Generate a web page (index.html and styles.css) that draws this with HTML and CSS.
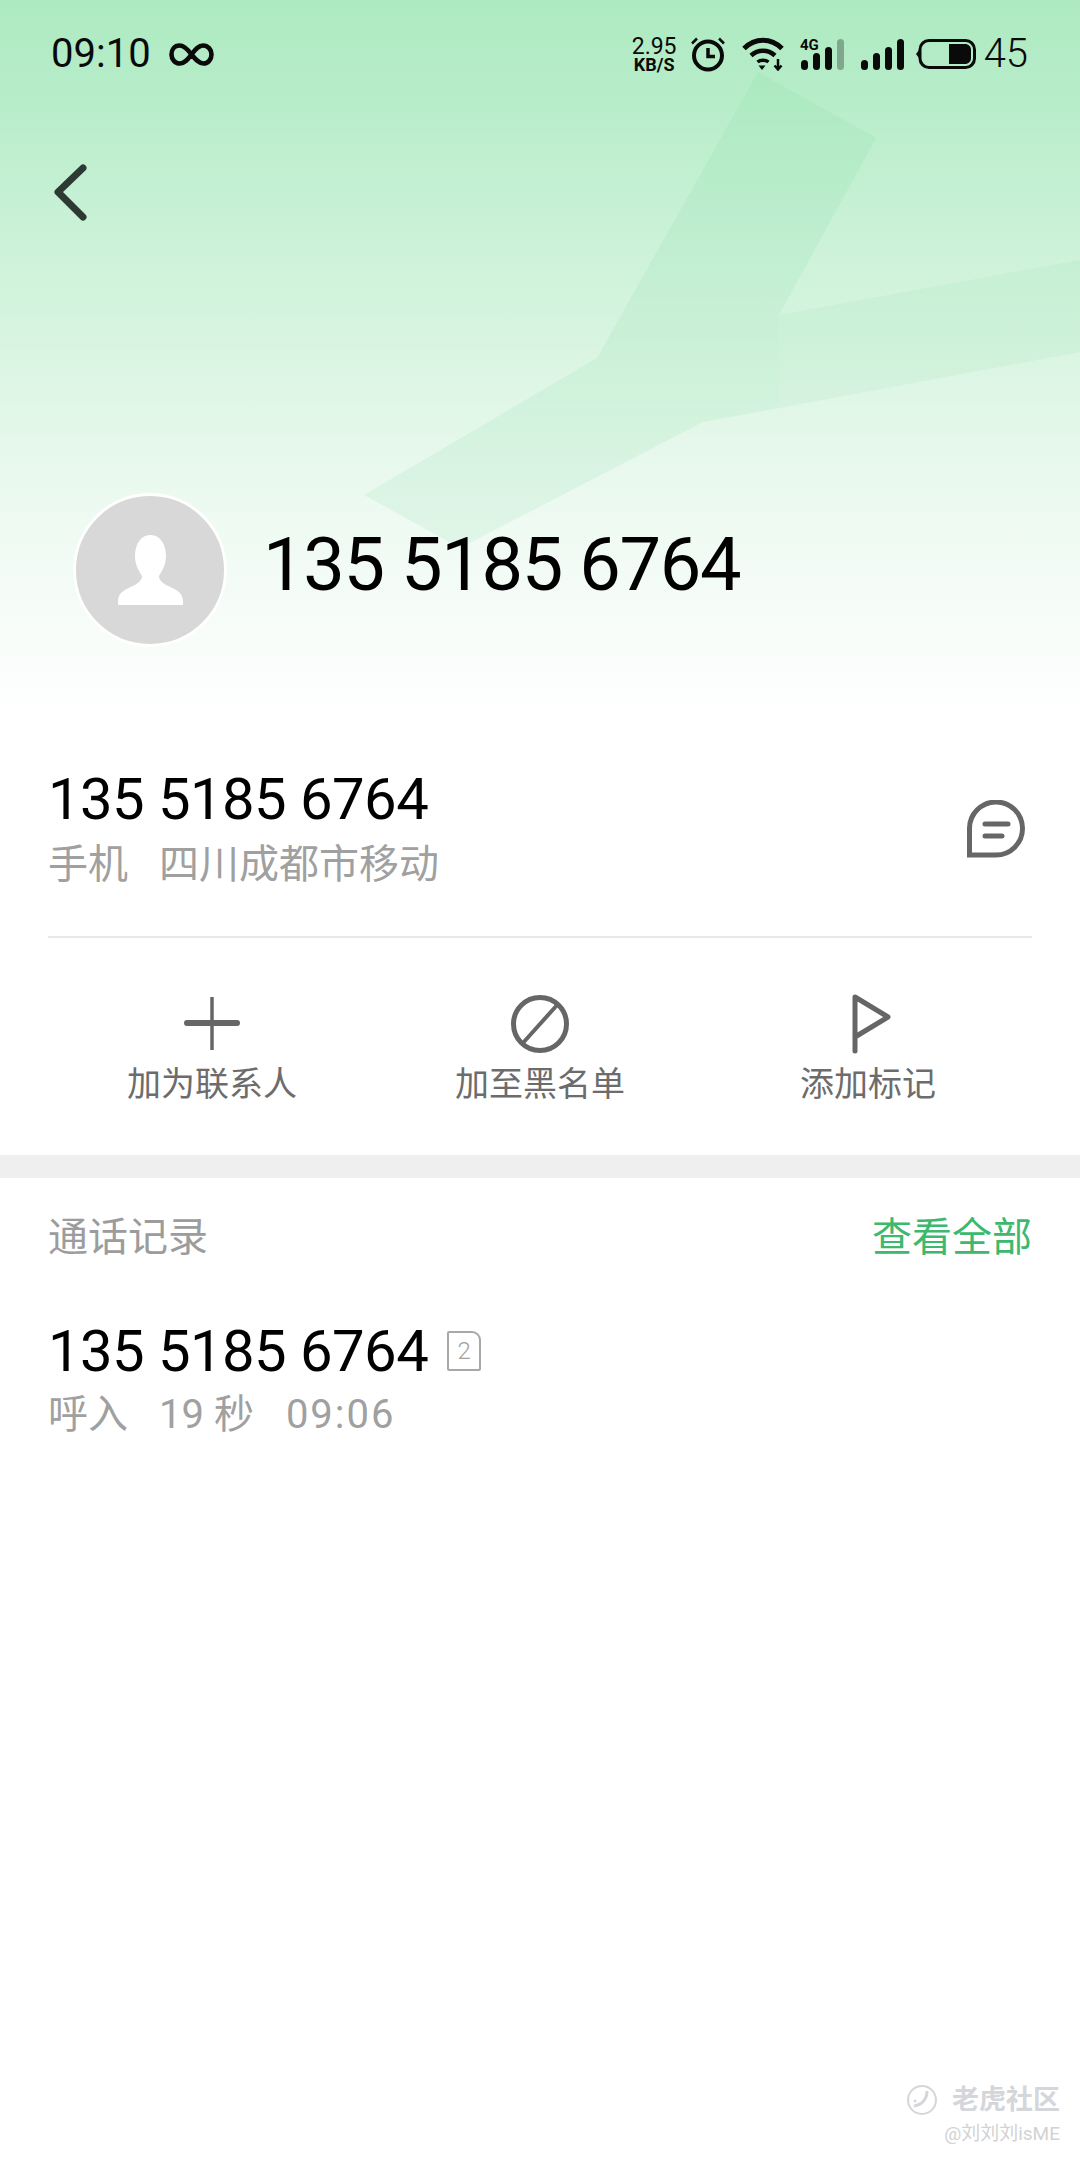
FILE: index.html
```html
<!DOCTYPE html>
<html lang="zh-CN">
<head>
  <meta charset="UTF-8">
  <meta name="viewport" content="width=device-width, initial-scale=1.0">
  <title>135 5185 6764</title>
  <link rel="stylesheet" href="styles.css">
</head>
<body>
  <header class="hero">
    <!-- background ribbon -->
    <svg class="hero-ribbon" width="1080" height="720" viewBox="0 0 1080 720">
      <polygon class="ribbon-main" points="758,72 876,138 779,315 779,408 703,422 460,548 364,495 597,358"/>
      <polygon class="ribbon-wing" points="779,315 1080,260 1080,352 779,408"/>
    </svg>

    <div class="status-bar">
      <div class="status-left">
        <span class="status-time">09:10</span>
        <svg class="icon-infinity" width="45" height="23" viewBox="0 0 45 23">
          <path d="M22.500 11.500C17 4 14 2.500 10.500 2.500C5.500 2.500 2.500 6.500 2.500 11.500C2.500 16.500 6 20.500 11 20.500C16 20.500 19 16 22.500 11.500C26 7 29 2.500 34 2.500C39 2.500 42.500 6.500 42.500 11.500C42.500 16.500 39 20.500 34.500 20.500C30 20.500 27 17 22.500 11.500Z" fill="none" stroke="#0a0a0a" stroke-width="4.600"/>
        </svg>
      </div>
      <div class="status-right">
        <div class="net-speed">
          <span class="net-value">2.95</span>
          <span class="net-unit">KB/S</span>
        </div>
        <svg width="36" height="36" viewBox="0 0 36 36" fill="none" stroke="#0a0a0a">
          <circle cx="18" cy="19.500" r="14" stroke-width="4"/>
          <path d="M18 12V20.500H25" stroke-width="3.500"/>
          <path d="M2 7.500L7 2.500M34 7.500L29 2.500" stroke-width="2.500"/>
        </svg>
        <svg width="42" height="34" viewBox="0 0 42 34" fill="none" stroke="#0a0a0a">
          <path d="M2 11.500C13 0.500 29 0.500 40 11.500" stroke-width="5"/>
          <path d="M9 18.500C16 12 26 12 33 18.500" stroke-width="4.500"/>
          <path d="M15.500 25C18.500 22.500 23.500 22.500 26.500 25" stroke-width="3.500"/>
          <path d="M16.500 28.500H23.500L20 33Z" fill="#0a0a0a" stroke="none"/>
          <path d="M36 22V32M32.500 28.500L36 32.500L39.500 28.500" stroke-width="2.500"/>
        </svg>
        <svg class="icon-sig4g" width="44" height="36" viewBox="0 -3 44 36">
          <text class="sig-label" x="0" y="12">4G</text>
          <rect x="1" y="22" width="7" height="10" rx="3.500" fill="#0a0a0a"/>
          <rect x="13" y="15" width="7" height="17" rx="3.500" fill="#0a0a0a"/>
          <rect x="25" y="9" width="7" height="23" rx="3.500" fill="#0a0a0a"/>
          <rect x="37" y="1" width="7" height="31" rx="3.500" fill="#0a0a0a" opacity="0.3"/>
        </svg>
        <svg width="44" height="33" viewBox="0 0 44 33" fill="#0a0a0a">
          <rect x="1" y="22" width="7" height="10" rx="3.500"/>
          <rect x="13" y="15" width="7" height="17" rx="3.500"/>
          <rect x="25" y="9" width="7" height="23" rx="3.500"/>
          <rect x="37" y="1" width="7" height="31" rx="3.500"/>
        </svg>
        <svg class="icon-battery" width="60" height="30" viewBox="0 0 60 30">
          <path d="M3 11L0 15L3 19Z" fill="#0a0a0a"/>
          <rect x="4" y="1.500" width="54.500" height="27" rx="9" fill="none" stroke="#0a0a0a" stroke-width="3"/>
          <path d="M33 5H49C52.500 5 55 7.500 55 11V19C55 22.500 52.500 25 49 25H33Z" fill="#0a0a0a"/>
        </svg>
        <span class="status-battery">45</span>
      </div>
    </div>

    <div class="nav">
      <svg width="40" height="60" viewBox="0 0 40 60" fill="none" stroke="#2c3a33" stroke-width="7" stroke-linecap="round" stroke-linejoin="round">
        <path d="M30 5L5 29L30 54"/>
      </svg>
    </div>

    <div class="profile">
      <div class="avatar">
        <svg width="65" height="70" viewBox="0 0 65 70">
          <path d="M32.500 0C42 0 48 9 48 21C48 30 44 36 41 41C41 45 44 47 48 50C57 54 65 57 65 66V70H0V66C0 57 8 54 17 50C21 47 24 45 24 41C21 36 17 30 17 21C17 9 23 0 32.500 0Z" fill="#fff"/>
        </svg>
      </div>
      <div class="profile-number">135 5185 6764</div>
    </div>
  </header>

  <section class="contact">
    <div class="contact-row">
      <div>
        <div class="number">135 5185 6764</div>
        <div class="sub"><span>手机</span><span>四川成都市移动</span></div>
      </div>
      <svg class="icon-message" width="58" height="58" viewBox="0 0 58 58" fill="none" stroke="#666" stroke-width="5">
        <path d="M2.500 55V29A26.500 26.500 0 1 1 29 55Z"/>
        <path d="M18 24H41M18 36H35" stroke-linecap="round"/>
      </svg>
    </div>

    <div class="actions">
      <div class="action">
        <svg width="60" height="60" viewBox="0 0 60 60" fill="none" stroke="#666">
          <path d="M30 3V56" stroke-width="3.500"/>
          <path d="M5 29H55" stroke-width="6" stroke-linecap="round"/>
        </svg>
        <span>加为联系人</span>
      </div>
      <div class="action">
        <svg width="60" height="60" viewBox="0 0 60 60" fill="none" stroke="#666" stroke-width="5">
          <circle cx="30" cy="30" r="26.500"/>
          <path d="M12 50L48 10" stroke-width="4"/>
        </svg>
        <span>加至黑名单</span>
      </div>
      <div class="action">
        <svg width="60" height="60" viewBox="0 0 60 60" fill="none" stroke="#666" stroke-width="5" stroke-linejoin="round" stroke-linecap="round">
          <path d="M17 57V3L50 23L17 43"/>
        </svg>
        <span>添加标记</span>
      </div>
    </div>
  </section>

  <div class="band"></div>

  <section class="calls">
    <div class="calls-head">
      <span class="calls-title">通话记录</span>
      <span class="calls-all">查看全部</span>
    </div>
    <div class="call">
      <div class="call-top">
        <span class="number">135 5185 6764</span>
        <span class="sim">2</span>
      </div>
      <div class="sub call-sub"><span>呼入</span><span>19 秒</span><span class="sub-time">09:06</span></div>
    </div>
  </section>

  <div class="watermark">
    <div class="wm-brand">
      <svg width="32" height="32" viewBox="0 0 32 32" fill="none" stroke="#d4d6da" stroke-width="2">
        <circle cx="16" cy="16" r="14"/>
        <path d="M21 7C21 15 16 21 8 22" stroke-width="3"/>
        <path d="M9 17h.1M13 20h.1" stroke-width="3" stroke-linecap="round"/>
      </svg>
      <span>老虎社区</span>
    </div>
    <div class="wm-user">@刘刘刘isME</div>
  </div>
</body>
</html>
```

FILE: styles.css
```css
* {
  box-sizing: border-box;
}
html, body {
  margin: 0;
  padding: 0;
}
body {
  position: relative;
  width: 1080px;
  height: 2160px;
  overflow: hidden;
  background-color: #fff;
  color: #000;
  font-family: Roboto, "Noto Sans CJK SC", sans-serif;
}

.hero {
  position: relative;
  height: 720px;
  background: linear-gradient(180deg, #aeeac1 0%, #b4ecc7 10%, #cdf2d9 35%, #e2f7e8 58%, #eefaf2 72%, #f6fcf8 85%, #fff 100%);
}
.hero-ribbon {
  position: absolute;
  top: 0;
  left: 0;
}
.ribbon-main {
  fill: #6fd692;
  opacity: 0.12;
}
.ribbon-wing {
  fill: #6fd692;
  opacity: 0.09;
}

.status-bar {
  position: relative;
  display: flex;
  justify-content: space-between;
  align-items: center;
  height: 106px;
  padding: 2px 52px 0 51px;
}
.status-left, .status-right {
  display: flex;
  align-items: center;
}
.status-right {
  gap: 16px;
}
.status-time {
  font-size: 40px;
  line-height: 48px;
  color: #0a0a0a;
}
.icon-infinity {
  margin-left: 18px;
}
.net-speed {
  display: flex;
  flex-direction: column;
  align-items: center;
  width: 43px;
  margin-left: 2px;
  margin-right: -2px;
  color: #0a0a0a;
}
.net-value {
  font-size: 23px;
  line-height: 21px;
}
.net-unit {
  font-size: 18px;
  line-height: 15px;
  font-weight: 700;
}
.icon-sig4g {
  margin-top: -3px;
}
.sig-label {
  font-family: Roboto, sans-serif;
  font-size: 15px;
  font-weight: 700;
  fill: #0a0a0a;
}
.icon-battery {
  margin-left: -4px;
}
.status-battery {
  margin-left: -8px;
  font-size: 40px;
  font-weight: 300;
  line-height: 48px;
  color: #0a0a0a;
}

.nav {
  position: relative;
  padding: 57px 0 0 53px;
  height: 132px;
}
.nav svg {
  display: block;
}

.profile {
  position: relative;
  display: flex;
  align-items: center;
  margin-top: 255px;
  padding-left: 73px;
}
.avatar {
  display: flex;
  align-items: center;
  justify-content: center;
  flex-shrink: 0;
  width: 154px;
  height: 154px;
  border: 3px solid #fff;
  border-radius: 50%;
  background-color: #d8d8d8;
}
.profile-number {
  margin: 0 0 10px 36px;
  font-size: 74px;
  line-height: 88px;
  letter-spacing: -1.300px;
  white-space: nowrap;
}

.contact {
  padding: 47px 48px 0;
}
.contact-row {
  display: flex;
  justify-content: space-between;
  align-items: center;
  padding-bottom: 39px;
  border-bottom: 2px solid #e8e8e8;
}
.icon-message {
  margin: 0 7px 7px 0;
}
.number {
  font-size: 58px;
  line-height: 64px;
  letter-spacing: -0.550px;
  white-space: nowrap;
}
.sub {
  display: flex;
  gap: 31px;
  margin-top: 2px;
  font-size: 40px;
  line-height: 64px;
  color: #a0a0a0;
}
.call-sub {
  margin-top: 0;
}
.sub-time {
  margin-left: 1px;
  letter-spacing: 2px;
}

.actions {
  display: grid;
  grid-template-columns: repeat(3, 1fr);
  padding: 56px 0 49px;
}
.action {
  display: flex;
  flex-direction: column;
  align-items: center;
  color: #6c6c6c;
  font-size: 34px;
  line-height: 44px;
}
.action svg {
  display: block;
  margin-bottom: 8px;
}

.band {
  height: 23px;
  background-color: #efefef;
}

.calls {
  padding: 26px 48px 0;
}
.calls-head {
  display: flex;
  justify-content: space-between;
  align-items: center;
  height: 60px;
  font-size: 40px;
}
.calls-title {
  color: #9c9c9c;
}
.calls-all {
  color: #3db96f;
}
.call {
  margin-top: 55px;
}
.call-top {
  display: flex;
  align-items: center;
  gap: 19px;
}
.sim {
  display: flex;
  align-items: center;
  justify-content: center;
  width: 34px;
  height: 40px;
  border: 2px solid #a8a8a8;
  border-radius: 2px 9px 2px 2px;
  color: #a0a0a0;
  font-size: 24px;
  font-weight: 300;
}

.watermark {
  position: absolute;
  right: 20px;
  bottom: 14px;
  display: flex;
  flex-direction: column;
  align-items: flex-end;
  color: #d4d6da;
}
.wm-brand {
  display: flex;
  align-items: center;
  gap: 14px;
  font-size: 27px;
  line-height: 36px;
  font-weight: 700;
}
.wm-user {
  margin-top: 4px;
  font-size: 19px;
  line-height: 24px;
  color: #d2d2d2;
}
```
